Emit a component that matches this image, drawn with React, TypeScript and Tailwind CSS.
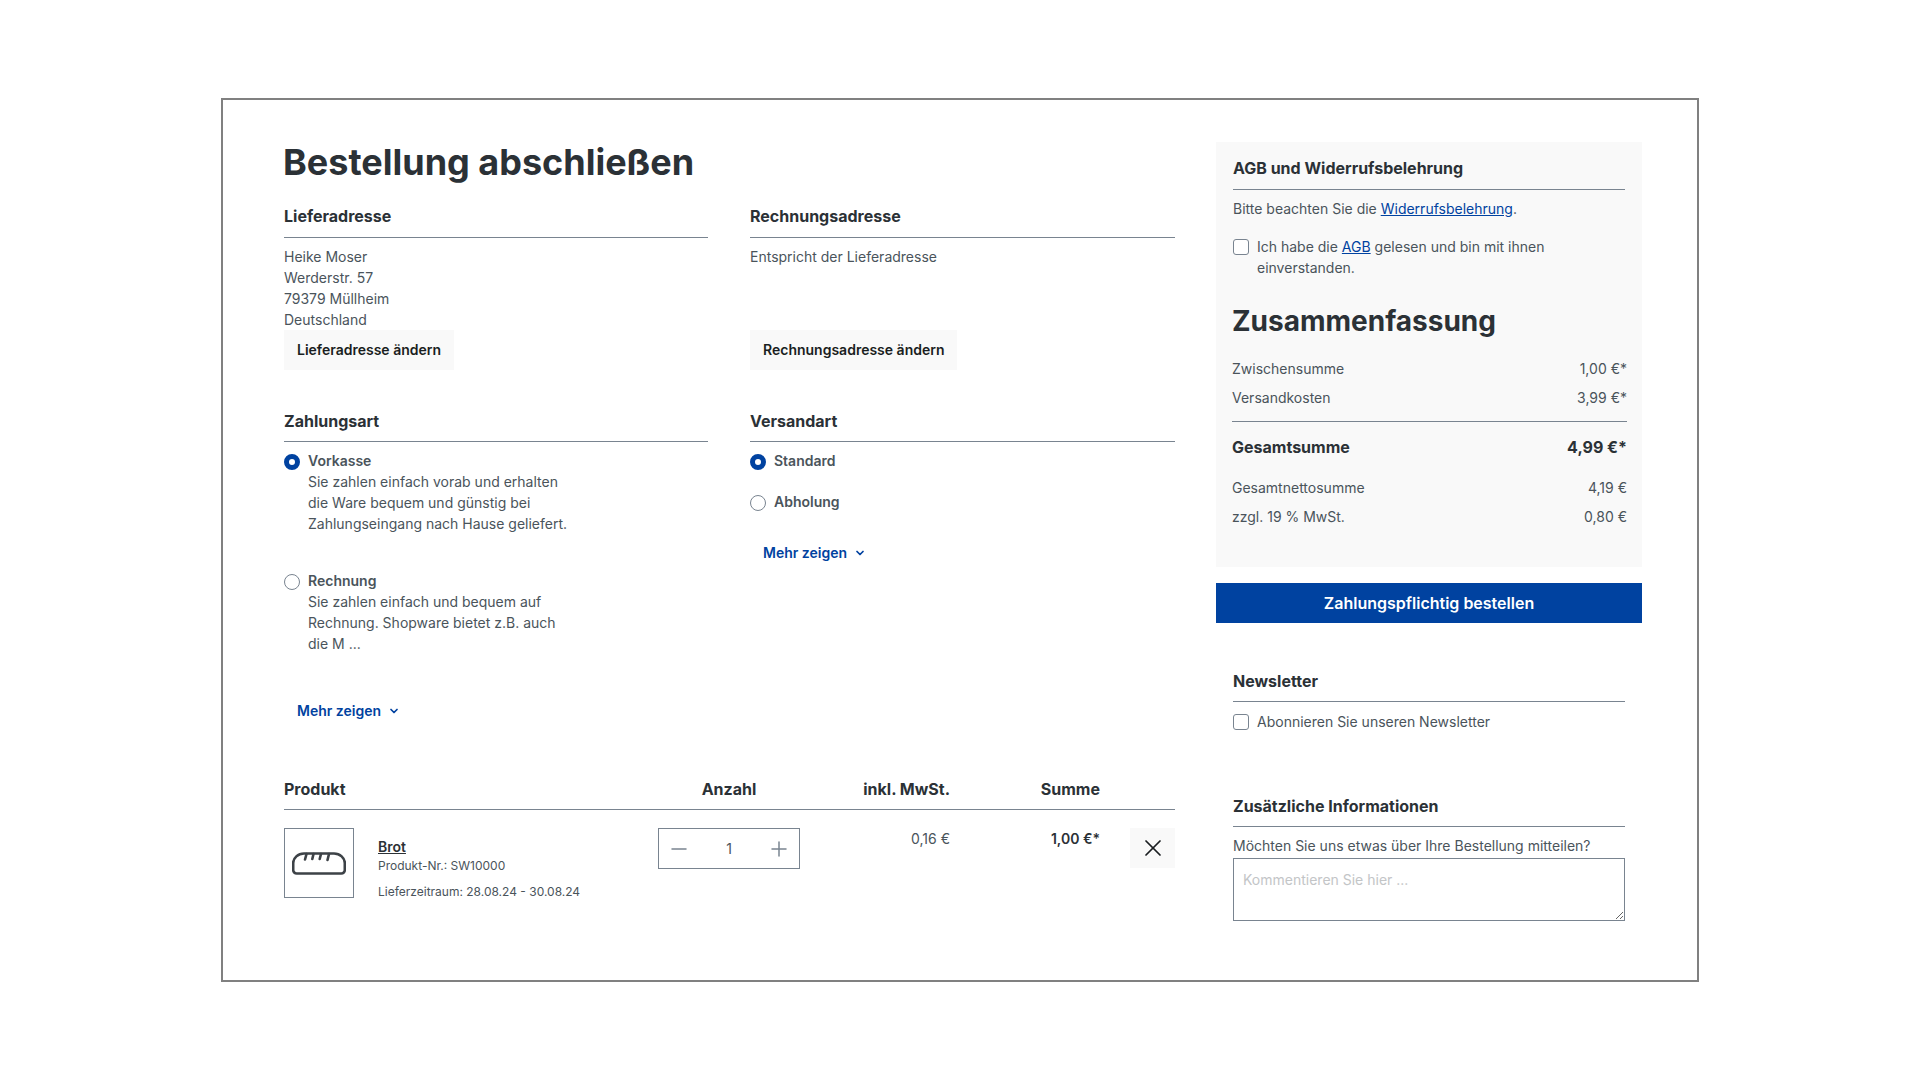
import { ChevronDown, Minus, Plus, X } from 'lucide-react'

function SectionTitle({ children, tight }: { children: React.ReactNode; tight?: boolean }) {
  return (
    <h2 className={tight ? 'text-base leading-6 font-bold text-[#2b3136] pb-2 border-b border-[#798490]' : 'text-base leading-6 font-bold text-[#2b3136] pb-[9px] border-b border-[#798490]'}>
      {children}
    </h2>
  )
}

function Radio({ name, checked, label, children }: { name: string; checked?: boolean; label: string; children?: React.ReactNode }) {
  return (
    <label className="flex gap-2">
      <input
        type="radio"
        name={name}
        defaultChecked={checked}
        className="appearance-none w-4 h-4 mt-[4px] shrink-0 rounded-full bg-white border border-[#798490] checked:border-[5px] checked:border-[#0042a0]"
      />
      <span>
        <span className="block font-semibold text-[#4a545b]">{label}</span>
        {children}
      </span>
    </label>
  )
}

function MoreLink() {
  return (
    <a className="inline-flex items-center gap-[7px] font-semibold text-[#0042a0]">
      Mehr zeigen
      <ChevronDown size={12} strokeWidth={3.5} />
    </a>
  )
}

function Checkbox({ children }: { children: React.ReactNode }) {
  return (
    <label className="flex gap-2">
      <input
        type="checkbox"
        className="appearance-none w-4 h-4 mt-[3px] shrink-0 rounded-[3px] bg-white border border-[#798490]"
      />
      <span>{children}</span>
    </label>
  )
}

function SummaryRow({ label, value }: { label: string; value: string }) {
  return (
    <div className="flex justify-between h-[29px] items-center">
      <span>{label}</span>
      <span>{value}</span>
    </div>
  )
}

function BreadIcon() {
  return (
    <svg width="54" height="23" viewBox="0 0 54 23" fill="none" stroke="#3d4247" strokeWidth="2.6" strokeLinecap="round">
      <path d="M12 1.5H42C48 1.5 52.8 6 52.8 11V18A3.5 3.5 0 0 1 49.3 21.5H4.7A3.5 3.5 0 0 1 1.2 18V11C1.2 6 6 1.5 12 1.5Z" />
      <path d="M14.5 2L13 7.5M21.5 2L20.3 7M29 2L27.7 7M37 2L35.5 8" />
    </svg>
  )
}

export default function App() {
  return (
    <div className="min-h-screen bg-white pt-[98px] pl-[221px] font-['Inter',sans-serif] text-sm leading-[21px] text-[#4a545b]">
      <div className="w-[1478px] h-[884px] border-2 border-[#808080] pl-[61px] pt-[42px] flex gap-[41px]">
        <div className="w-[891px]">
          <h1 className="-mt-px -ml-px text-4xl leading-[43px] font-bold text-[#2b3136] mb-5">Bestellung abschließen</h1>

          <div className="grid grid-cols-[424px_425px] gap-x-[42px]">
            <section>
              <SectionTitle>Lieferadresse</SectionTitle>
              <div className="mt-2 h-[84px]">
                <p>Heike Moser</p>
                <p>Werderstr. 57</p>
                <p>79379 Müllheim</p>
                <p>Deutschland</p>
              </div>
              <button className="h-10 px-[13px] pb-px bg-[#f9f9f9] font-semibold text-[#1a1e21]">Lieferadresse ändern</button>
            </section>
            <section>
              <SectionTitle>Rechnungsadresse</SectionTitle>
              <div className="mt-2 h-[84px]">
                <p>Entspricht der Lieferadresse</p>
              </div>
              <button className="h-10 px-[13px] pb-px bg-[#f9f9f9] font-semibold text-[#1a1e21]">Rechnungsadresse ändern</button>
            </section>

            <section className="mt-[39px]">
              <SectionTitle tight>Zahlungsart</SectionTitle>
              <div className="mt-2 flex flex-col gap-[36px] w-[290px]">
                <Radio name="payment" checked label="Vorkasse">
                  <span className="block">Sie zahlen einfach vorab und erhalten die Ware bequem und günstig bei Zahlungseingang nach Hause geliefert.</span>
                </Radio>
                <Radio name="payment" label="Rechnung">
                  <span className="block w-[262px]">Sie zahlen einfach und bequem auf Rechnung. Shopware bietet z.B. auch die M ...</span>
                </Radio>
              </div>
              <div className="mt-[46px] pl-[13px]">
                <MoreLink />
              </div>
            </section>
            <section className="mt-[39px]">
              <SectionTitle tight>Versandart</SectionTitle>
              <div className="mt-2 flex flex-col gap-[20px]">
                <Radio name="shipping" checked label="Standard" />
                <Radio name="shipping" label="Abholung" />
              </div>
              <div className="mt-[30px] pl-[13px]">
                <MoreLink />
              </div>
            </section>
          </div>

          <div className="mt-[56px] grid grid-cols-[374px_142px_150px_150px_75px] border-b border-[#798490] pb-2 text-base leading-6 font-bold text-[#2b3136]">
            <span>Produkt</span>
            <span className="text-center">Anzahl</span>
            <span className="text-right">inkl. MwSt.</span>
            <span className="text-right">Summe</span>
            <span />
          </div>

          <div className="mt-[18px] grid grid-cols-[374px_142px_150px_150px_75px] items-start">
            <div className="flex gap-6">
              <div className="w-[70px] h-[70px] border border-[#798490] flex items-center justify-center">
                <BreadIcon />
              </div>
              <div className="pt-[8px] text-xs leading-[18px]">
                <a className="block text-sm leading-[21px] font-semibold text-[#2b3136] underline">Brot</a>
                <p>Produkt-Nr.: SW10000</p>
                <p className="mt-2">Lieferzeitraum: 28.08.24 - 30.08.24</p>
              </div>
            </div>
            <div className="h-[41px] border border-[#798490] flex items-center justify-between px-[10px]">
              <Minus size={24} strokeWidth={1.5} className="text-[#798490] -ml-[2px]" />
              <span>1</span>
              <Plus size={24} strokeWidth={1.5} className="text-[#798490] -mr-[2px]" />
            </div>
            <span className="text-right">0,16 €</span>
            <span className="text-right font-semibold text-[#2b3136]">1,00 €*</span>
            <div className="flex justify-end">
              <button className="w-[45px] h-10 bg-[#f9f9f9] flex items-center justify-center text-[#1a1e21]">
                <X size={28} strokeWidth={1.5} />
              </button>
            </div>
          </div>
        </div>

        <div className="w-[426px]">
          <div className="bg-[#f9f9f9] h-[425px] pt-[14px]">
            <div className="px-[17px]">
              <SectionTitle>AGB und Widerrufsbelehrung</SectionTitle>
              <p className="mt-2">
                Bitte beachten Sie die <a className="text-[#0042a0] underline">Widerrufsbelehrung</a>.
              </p>
              <div className="mt-[17px]">
                <Checkbox>
                  Ich habe die <a className="text-[#0042a0] underline">AGB</a> gelesen und bin mit ihnen einverstanden.
                </Checkbox>
              </div>
            </div>
            <div className="pl-4 pr-[15px] mt-[26px]">
              <h2 className="text-[28px] leading-[34px] font-bold text-[#2b3136] mb-4">Zusammenfassung</h2>
              <SummaryRow label="Zwischensumme" value="1,00 €*" />
              <SummaryRow label="Versandkosten" value="3,99 €*" />
              <div className="mt-[9px] border-t border-[#798490] flex justify-between items-center h-[50px] text-base font-bold text-[#2b3136]">
                <span>Gesamtsumme</span>
                <span>4,99 €*</span>
              </div>
              <div className="mt-[2px]">
                <SummaryRow label="Gesamtnettosumme" value="4,19 €" />
                <SummaryRow label="zzgl. 19 % MwSt." value="0,80 €" />
              </div>
            </div>
          </div>

          <button className="mt-4 w-full h-10 bg-[#0042a0] text-white text-base font-semibold">Zahlungspflichtig bestellen</button>

          <div className="px-[17px] mt-[46px]">
            <SectionTitle tight>Newsletter</SectionTitle>
            <div className="mt-[9px]">
              <Checkbox>Abonnieren Sie unseren Newsletter</Checkbox>
            </div>

            <div className="mt-[62px]">
              <SectionTitle tight>Zusätzliche Informationen</SectionTitle>
            </div>
            <p className="mt-2">Möchten Sie uns etwas über Ihre Bestellung mitteilen?</p>
            <textarea
              placeholder="Kommentieren Sie hier ..."
              className="block mt-[2px] w-full h-[63px] border border-[#798490] px-[9px] py-[10px] placeholder:text-[#c3c5c7] outline-none"
            />
          </div>
        </div>
      </div>
    </div>
  )
}
